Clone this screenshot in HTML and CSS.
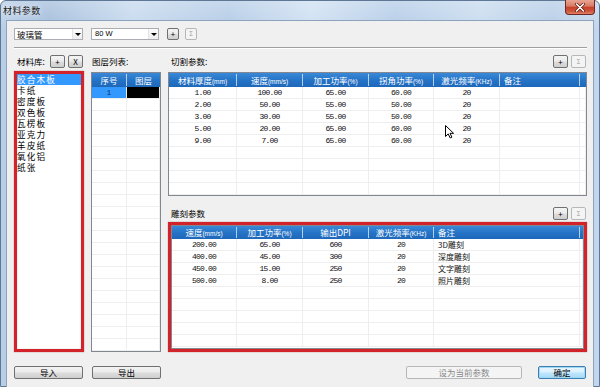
FILE: index.html
```html
<!DOCTYPE html>
<html>
<head>
<meta charset="utf-8">
<link rel="stylesheet" href="styles.css">
</head>
<body>
<div class="window">
  <div class="titlebar">
    <span class="title">材料参数</span>
    <div class="close">
      <svg width="10" height="9" viewBox="0 0 10 9"><path d="M1.5 1 L8.5 8 M8.5 1 L1.5 8" stroke="#5a1a12" stroke-width="3" stroke-linecap="round"/><path d="M1.5 1 L8.5 8 M8.5 1 L1.5 8" stroke="#ffffff" stroke-width="1.6" stroke-linecap="round"/></svg>
    </div>
  </div>
  <div class="client">
    <div class="toprow">
      <div class="combo c1"><span class="ctext">玻璃管</span><span class="arrow"><i></i></span></div>
      <div class="combo c2"><span class="ctext">80 W</span><span class="arrow"><i></i></span></div>
      <button class="btn tb">+</button>
      <button class="btn tb dis">Σ</button>
    </div>
    <div class="sep"></div>
    <div class="main">
      <div class="col">
        <div class="hdr">
          <span class="lbl lbl-mat">材料库:</span>
          <button class="btn hb">+</button>
          <button class="btn hb">X</button>
        </div>
        <div class="redbox matlist">
          <div class="item sel">胶合木板</div>
          <div class="item">卡纸</div>
          <div class="item">密度板</div>
          <div class="item">双色板</div>
          <div class="item">瓦楞板</div>
          <div class="item">亚克力</div>
          <div class="item">羊皮纸</div>
          <div class="item">氧化铝</div>
          <div class="item">纸张</div>
        </div>
      </div>
      <div class="col">
        <div class="hdr"><span class="lbl">图层列表:</span></div>
        <div class="gt layer">
          <div class="th layer-cols"><div>序号</div><div class="last">图层</div></div>
          <div class="tr layer-cols"><div class="lsel">1</div><div class="lblack"></div></div>
          <div class="tr layer-cols"><div></div><div></div></div>
          <div class="tr layer-cols"><div></div><div></div></div>
          <div class="tr layer-cols"><div></div><div></div></div>
          <div class="tr layer-cols"><div></div><div></div></div>
          <div class="tr layer-cols"><div></div><div></div></div>
          <div class="tr layer-cols"><div></div><div></div></div>
          <div class="tr layer-cols"><div></div><div></div></div>
          <div class="tr layer-cols"><div></div><div></div></div>
          <div class="tr layer-cols"><div></div><div></div></div>
          <div class="tr layer-cols"><div></div><div></div></div>
          <div class="tr layer-cols"><div></div><div></div></div>
          <div class="tr layer-cols"><div></div><div></div></div>
          <div class="tr layer-cols"><div></div><div></div></div>
          <div class="tr layer-cols"><div></div><div></div></div>
          <div class="tr layer-cols"><div></div><div></div></div>
          <div class="tr layer-cols"><div></div><div></div></div>
          <div class="tr layer-cols"><div></div><div></div></div>
          <div class="tr layer-cols"><div></div><div></div></div>
          <div class="tr layer-cols"><div></div><div></div></div>
          <div class="tr layer-cols"><div></div><div></div></div>
          <div class="tr layer-cols"><div></div><div></div></div>
        </div>
      </div>
      <div class="col">
        <div class="hdr">
          <span class="lbl lbl-right">切割参数:</span>
          <span class="grow"></span>
          <button class="btn hb">+</button>
          <button class="btn hb dis">Σ</button>
        </div>
        <div class="gt cut">
          <div class="th cut-cols"><div>材料厚度<small>(mm)</small></div><div>速度<small>(mm/s)</small></div><div>加工功率<small>(%)</small></div><div>拐角功率<small>(%)</small></div><div>激光频率<small>(KHz)</small></div><div class="left">备注</div><div class="last"></div></div>
          <div class="tr cut-cols num"><div>1.00</div><div>100.00</div><div>65.00</div><div>60.00</div><div>20</div><div></div><div></div></div>
          <div class="tr cut-cols num"><div>2.00</div><div>50.00</div><div>55.00</div><div>50.00</div><div>20</div><div></div><div></div></div>
          <div class="tr cut-cols num"><div>3.00</div><div>30.00</div><div>55.00</div><div>50.00</div><div>20</div><div></div><div></div></div>
          <div class="tr cut-cols num"><div>5.00</div><div>20.00</div><div>65.00</div><div>60.00</div><div>20</div><div></div><div></div></div>
          <div class="tr cut-cols num"><div>9.00</div><div>7.00</div><div>65.00</div><div>60.00</div><div>20</div><div></div><div></div></div>
          <div class="tr cut-cols"><div></div><div></div><div></div><div></div><div></div><div></div><div></div></div>
          <div class="tr cut-cols"><div></div><div></div><div></div><div></div><div></div><div></div><div></div></div>
          <div class="tr cut-cols"><div></div><div></div><div></div><div></div><div></div><div></div><div></div></div>
          <div class="tr cut-cols"><div></div><div></div><div></div><div></div><div></div><div></div><div></div></div>
        </div>
        <div class="hdr hdr2">
          <span class="lbl lbl-right">雕刻参数</span>
          <span class="grow"></span>
          <button class="btn hb">+</button>
          <button class="btn hb dis">Σ</button>
        </div>
        <div class="redbox engbox">
          <div class="gt eng">
            <div class="th eng-cols"><div>速度<small>(mm/s)</small></div><div>加工功率<small>(%)</small></div><div>输出DPI</div><div>激光频率<small>(KHz)</small></div><div class="left">备注</div><div class="last"></div></div>
            <div class="tr eng-cols num"><div>200.00</div><div>65.00</div><div>600</div><div>20</div><div class="rem">3D雕刻</div><div></div></div>
            <div class="tr eng-cols num"><div>400.00</div><div>45.00</div><div>300</div><div>20</div><div class="rem">深度雕刻</div><div></div></div>
            <div class="tr eng-cols num"><div>450.00</div><div>15.00</div><div>250</div><div>20</div><div class="rem">文字雕刻</div><div></div></div>
            <div class="tr eng-cols num"><div>500.00</div><div>8.00</div><div>250</div><div>20</div><div class="rem">照片雕刻</div><div></div></div>
            <div class="tr eng-cols"><div></div><div></div><div></div><div></div><div></div><div></div></div>
            <div class="tr eng-cols"><div></div><div></div><div></div><div></div><div></div><div></div></div>
            <div class="tr eng-cols"><div></div><div></div><div></div><div></div><div></div><div></div></div>
            <div class="tr eng-cols"><div></div><div></div><div></div><div></div><div></div><div></div></div>
            <div class="tr eng-cols"><div></div><div></div><div></div><div></div><div></div><div></div></div>
          </div>
        </div>
      </div>
    </div>
    <div class="bottom">
      <button class="btn bb">导入</button>
      <button class="btn bb">导出</button>
      <span class="grow"></span>
      <button class="btn bb wide dis">设为当前参数</button>
      <button class="btn bb ok">确定</button>
    </div>
  </div>
  <svg class="cursor" width="10" height="14" viewBox="0 0 10 14"><path d="M0.5 0.5 L0.5 11.5 L3.2 8.9 L5.2 13 L6.9 12.2 L5 8.3 L8.6 8.3 Z" fill="#ffffff" stroke="#000000" stroke-width="1" stroke-linejoin="round"/></svg>
</div>
</body>
</html>
```
FILE: styles.css
```css
* { box-sizing: border-box; }
html, body { margin: 0; padding: 0; }
body {
  width: 600px;
  height: 387px;
  overflow: hidden;
  font-family: "Noto Sans CJK SC", "Liberation Sans", sans-serif;
  color: #000;
}
.window {
  position: relative;
  width: 600px;
  height: 387px;
  padding: 0 5px 5px 5px;
  display: flex;
  flex-direction: column;
  background:
    linear-gradient(180deg, rgba(255,255,255,0.25), rgba(255,255,255,0) 30px),
    linear-gradient(90deg, #b9cfe6 0%, #a4bedc 8%, #c6d9ee 22%, #b3cbe6 38%, #cfe0f2 52%, #b4cce7 66%, #c8dbef 80%, #b6cde7 92%, #c3d6ec 100%);
  border: 1px solid #5d7795;
  border-radius: 6px 6px 0 0;
}
.titlebar {
  height: 19px;
  flex: none;
  display: flex;
  align-items: center;
  margin: 0 -5px;
  padding-left: 2px;
}
.title {
  font-size: 9px;
  letter-spacing: 0.4px;
  color: #1b1b1b;
  text-shadow: 0 0 4px rgba(255,255,255,0.9);
}
.close {
  position: absolute;
  top: -1px;
  right: 4px;
  width: 30px;
  height: 15px;
  border: 1px solid #6e2a22;
  border-top: none;
  border-radius: 0 0 4px 4px;
  background: linear-gradient(180deg, #e8a592 0%, #d77a63 45%, #c3412a 50%, #d0543a 80%, #e0826a 100%);
  display: flex;
  align-items: center;
  justify-content: center;
}
.client {
  flex: 1;
  background: #f0f0f0;
  border: 1px solid #8da3bd;
  display: flex;
  flex-direction: column;
  padding: 7px 6px 8px 7px;
}
.toprow {
  height: 12px;
  display: flex;
  align-items: stretch;
  flex: none;
}
.combo {
  background: #fff;
  border: 1px solid #abadb3;
  display: flex;
  align-items: center;
  font-size: 8.5px;
}
.c1 { width: 69px; }
.c2 { width: 68px; margin-left: 8px; }
.ctext { flex: 1; padding-left: 2px; line-height: 10px; white-space: nowrap; }
.c2 .ctext { font-family: "Liberation Sans", sans-serif; font-size: 7.5px; padding-left: 3px; }
.arrow {
  width: 10px;
  height: 10px;
  display: flex;
  align-items: center;
  justify-content: center;
  border-left: 1px solid #e3e3e3;
  background: linear-gradient(#fbfbfb, #eeeeee);
}
.arrow i {
  width: 0;
  height: 0;
  border-left: 3px solid transparent;
  border-right: 3px solid transparent;
  border-top: 3px solid #000;
}
.btn {
  margin: 0;
  padding: 0;
  border: 1px solid #707070;
  border-radius: 2px;
  background: linear-gradient(180deg, #f3f3f3 0%, #ebebeb 48%, #dddddd 52%, #cfcfcf 100%);
  font-family: "Noto Sans CJK SC", "Liberation Sans", sans-serif;
  font-size: 8px;
  line-height: 1;
  color: #000;
  display: flex;
  align-items: center;
  justify-content: center;
}
.btn.dis {
  border-color: #b5b8ba;
  background: #f4f4f4;
  color: #9a9a9a;
}
.tb { width: 12px; margin-left: 8px; font-size: 8px; }
.tb.dis { margin-left: 6px; font-size: 6px; }
.sep {
  flex: none;
  margin-top: 7px;
  height: 2px;
  border-top: 1px solid #a0a0a0;
  border-bottom: 1px solid #ffffff;
}
.main {
  flex: 1;
  margin-top: 6px;
  display: grid;
  grid-template-columns: 70px 70px 1fr;
  column-gap: 7px;
  min-height: 0;
}
.col {
  display: flex;
  flex-direction: column;
  min-height: 0;
}
.hdr {
  height: 13px;
  flex: none;
  display: flex;
  align-items: stretch;
}
.hdr2 { margin-top: 11px; }
.lbl {
  font-size: 8.5px;
  line-height: 13px;
  white-space: nowrap;
  margin-left: 1px;
}
.lbl-mat { margin-left: 3px; width: 33px; }
.lbl-right { margin-left: 3px; }
.grow { flex: 1; }
.hb { width: 15px; margin-right: 3px; font-size: 8px; }
.hb.dis { font-size: 6px; margin-right: 1px; }
.col .hdr .hb:last-child { margin-right: 1px; }
.redbox {
  border: 3px solid #d2232a;
  box-shadow: 0 0 1px 0 rgba(120,0,0,0.6), inset 0 0 1px 0 rgba(120,0,0,0.5);
  background: #fff;
  margin-top: 3px;
}
.matlist {
  flex: 1;
  overflow: hidden;
}
.item {
  height: 11px;
  font-size: 8.6px;
  line-height: 11px;
  letter-spacing: 1.15px;
  white-space: nowrap;
  padding-left: 0;
  color: #000;
}
.item.sel {
  background: #3399ff;
  color: #ffffff;
}
.gt {
  border: 1px solid #828790;
  background: #ffffff;
  overflow: hidden;
}
.layer { flex: 1; margin-top: 4px; }
.cut { height: 124px; flex: none; margin-top: 4px; }
.engbox { flex: 1; margin-top: 2px; display: flex; flex-direction: column; min-height: 0; }
.eng { flex: 1; min-height: 0; }
.th, .tr { display: grid; }
.layer-cols { grid-template-columns: 35px 1fr; }
.cut-cols { grid-template-columns: 68px 66px 66px 65px 66px 80px 1fr; }
.eng-cols { grid-template-columns: 65px 66px 66px 65px 146px 1fr; }
.th {
  height: 14px;
  background: linear-gradient(180deg, #3a89d8 0%, #2674c6 50%, #1d67b9 100%);
  color: #ffffff;
}
.eng .th { height: 13px; }
.th > div {
  font-size: 8.5px;
  text-align: center;
  white-space: nowrap;
  overflow: hidden;
  border-right: 1px solid rgba(225,238,252,0.75);
  margin: 1px 0;
  line-height: 12px;
}
.eng .th > div { line-height: 11px; }
.th > div.last { border-right: none; }
.th > div.left { text-align: left; padding-left: 4px; }
.th small { font-size: 6.5px; font-family: "Liberation Sans", sans-serif; }
.tr { height: 12px; border-bottom: 1px solid #eeeeee; }
.tr > div {
  border-right: 1px solid #eeeeee;
  text-align: center;
  line-height: 11px;
  white-space: nowrap;
  overflow: hidden;
}
.num > div {
  font-family: "Liberation Mono", monospace;
  font-size: 8px;
  letter-spacing: -0.8px;
  color: #111;
}
.num > div.rem {
  text-align: left;
  padding-left: 4px;
  font-family: "Noto Sans CJK SC", sans-serif;
  font-size: 8px;
  letter-spacing: 0;
}
.lsel {
  background: #3399ff;
  color: #0d2f6b;
  font-family: "Liberation Mono", monospace;
  font-size: 8px;
}
.lblack { background: #000000; }
.bottom {
  flex: none;
  margin-top: 14px;
  height: 13px;
  display: flex;
  padding-right: 1px;
}
.bb { width: 69px; font-size: 8.5px; }
.bb + .bb { margin-left: 9px; }
.bb.wide { width: 116px; margin-left: 0; color: #8a8a8a; }
.bb.ok {
  width: 48px;
  margin-left: 16px;
  border-color: #3c7fb1;
  background: linear-gradient(180deg, #eaf6fd 0%, #d9f0fc 48%, #bee6fd 52%, #a7d9f5 100%);
  box-shadow: inset 0 0 0 1px #9fd7f5;
}
.cursor {
  position: absolute;
  left: 444px;
  top: 124px;
}
```
